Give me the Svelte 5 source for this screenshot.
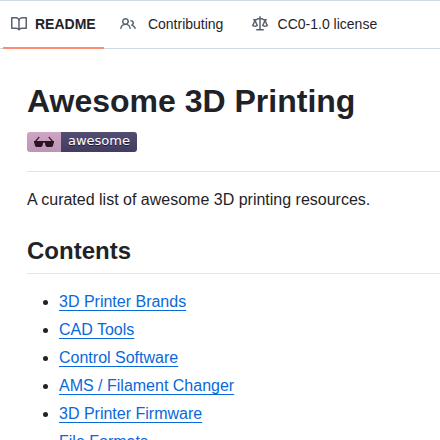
<script>
	const tabs = [
		{ id: 'readme', label: 'README' },
		{ id: 'contributing', label: 'Contributing' },
		{ id: 'license', label: 'CC0-1.0 license' }
	];

	const contents = [
		'3D Printer Brands',
		'CAD Tools',
		'Control Software',
		'AMS / Filament Changer',
		'3D Printer Firmware',
		'File Formats'
	];

	const icons = {
		readme:
			'M0 1.75A.75.75 0 0 1 .75 1h4.253c1.227 0 2.317.59 3 1.501A3.743 3.743 0 0 1 11.006 1h4.245a.75.75 0 0 1 .75.75v10.5a.75.75 0 0 1-.75.75h-4.507a2.25 2.25 0 0 0-1.591.659l-.622.621a.75.75 0 0 1-1.06 0l-.622-.621A2.25 2.25 0 0 0 5.258 13H.75a.75.75 0 0 1-.75-.75Zm7.251 10.324.004-5.073-.002-2.253A2.25 2.25 0 0 0 5.003 2.5H1.5v9h3.757a3.75 3.75 0 0 1 1.994.574ZM8.755 4.75l-.004 7.322a3.752 3.752 0 0 1 1.992-.572H14.5v-9h-3.495a2.25 2.25 0 0 0-2.25 2.25Z',
		contributing:
			'M2 5.5a3.5 3.5 0 1 1 5.898 2.549 5.508 5.508 0 0 1 3.034 4.084.75.75 0 1 1-1.482.235 4 4 0 0 0-7.9 0 .75.75 0 0 1-1.482-.236A5.507 5.507 0 0 1 3.102 8.05 3.493 3.493 0 0 1 2 5.5ZM11 4a3.001 3.001 0 0 1 2.22 5.018 5.01 5.01 0 0 1 2.56 3.012.749.749 0 0 1-.885.954.752.752 0 0 1-.549-.514 3.507 3.507 0 0 0-2.522-2.372.75.75 0 0 1-.574-.73v-.352a.75.75 0 0 1 .416-.672A1.5 1.5 0 0 0 11 5.5.75.75 0 0 1 11 4Zm-5.5-.5a2 2 0 1 0-.001 3.999A2 2 0 0 0 5.5 3.5Z',
		license:
			'M8.75.75V2h.985c.304 0 .603.08.867.231l1.29.736c.038.022.08.033.124.033h2.234a.75.75 0 0 1 0 1.5h-.427l2.111 4.692a.75.75 0 0 1-.154.838l-.53-.53.529.531-.001.002-.002.002-.006.006-.006.005-.01.01-.045.04c-.21.176-.441.327-.686.45C14.556 10.78 13.88 11 13 11a4.498 4.498 0 0 1-2.023-.454 3.544 3.544 0 0 1-.686-.45l-.045-.04-.016-.015-.006-.006-.004-.004v-.001a.75.75 0 0 1-.154-.838L12.178 4.5h-.162c-.305 0-.604-.079-.868-.231l-1.29-.736a.245.245 0 0 0-.124-.033H8.75V13h2.5a.75.75 0 0 1 0 1.5h-6.5a.75.75 0 0 1 0-1.5h2.5V3.5h-.984a.245.245 0 0 0-.124.033l-1.289.737c-.265.15-.564.23-.869.23h-.162l2.112 4.692a.75.75 0 0 1-.154.838l-.53-.53.529.531-.001.002-.002.002-.006.006-.016.015-.045.04c-.21.176-.441.327-.686.45C4.556 10.78 3.88 11 3 11a4.498 4.498 0 0 1-2.023-.454 3.544 3.544 0 0 1-.686-.45l-.045-.04-.016-.015-.006-.006-.004-.004v-.001a.75.75 0 0 1-.154-.838L2.178 4.5H1.75a.75.75 0 0 1 0-1.5h2.234a.249.249 0 0 0 .125-.033l1.288-.737c.265-.15.564-.23.869-.23h.984V.75a.75.75 0 0 1 1.5 0Zm2.945 8.477c.285.135.718.273 1.305.273s1.02-.138 1.305-.273L13 6.327Zm-10 0c.285.135.718.273 1.305.273s1.02-.138 1.305-.273L3 6.327Z'
	};

	let active = $state('readme');

	function slug(title) {
		return title.toLowerCase().replace(/[^a-z0-9 ]/g, '').replaceAll(' ', '-');
	}
</script>

<div class="page">
	<nav aria-label="Repository files">
		{#each tabs as tab}
			<a
				href="#{tab.id}"
				class="tab"
				class:active={active === tab.id}
				aria-current={active === tab.id ? 'page' : undefined}
				onclick={() => (active = tab.id)}
			>
				<svg viewBox="0 0 16 16" width="16" height="16" aria-hidden="true">
					<path d={icons[tab.id]} />
				</svg>
				<span class="label" data-content={tab.label}>{tab.label}</span>
			</a>
		{/each}
	</nav>

	<article>
		<header>
			<h1>Awesome 3D Printing</h1>
			<a class="badge" href="#awesome">
				<span class="glasses">
					<svg viewBox="0 0 20 12" width="20" height="12" aria-hidden="true">
						<path d="M1 6 5.2 1M19 6 14.8 1" fill="none" stroke="#3c2035" stroke-width="1.2" />
						<path
							d="M0 5h20v2l-.6.4-.3 2.2Q18.8 11 17.2 11h-3.8q-1.6 0-2-1.4L10.9 6.8H9.1l-.5 2.8Q8.2 11 6.6 11H2.8Q1.2 11 .9 9.6L.6 7.4 0 7Z"
							fill="#2b1225"
						/>
					</svg>
				</span>
				<span class="word">awesome</span>
			</a>
		</header>

		<p>A curated list of awesome 3D printing resources.</p>

		<h2>Contents</h2>
		<ul>
			{#each contents as item}
				<li><a href="#{slug(item)}">{item}</a></li>
			{/each}
		</ul>
	</article>
</div>

<style>
	:global(body) {
		margin: 0;
		background: #fff;
	}

	.page {
		height: 100vh;
		overflow: hidden;
		box-sizing: border-box;
		border-top: 1px solid #d1d9e0;
		color: #1f2328;
		font-family: 'Liberation Sans', Arial, sans-serif;
		font-size: 16px;
		line-height: 24px;
	}

	nav {
		display: flex;
		gap: 8px;
		padding-left: 3px;
		box-shadow: inset 0 -1px #d1d9e0;
	}

	.tab {
		display: flex;
		align-items: center;
		gap: 8px;
		height: 46px;
		padding: 0 8px;
		border-bottom: 2px solid transparent;
		color: inherit;
		font-size: 14px;
		line-height: 21px;
		text-decoration: none;
		white-space: nowrap;
	}

	.tab.active {
		border-color: #fd8c73;
		font-weight: 600;
	}

	.tab svg {
		fill: #59636e;
	}

	.label {
		text-align: center;
	}

	/* reserves the bold width so tabs don't shift when selected */
	.label::before {
		content: attr(data-content);
		display: block;
		height: 0;
		font-weight: 600;
		visibility: hidden;
	}

	article {
		padding: 32px 0 32px 27px;
	}

	header {
		padding-bottom: 19px;
		border-bottom: 1px solid #d1d9e0b3;
	}

	h1 {
		margin: 0 0 11px;
		font-size: 32px;
		line-height: 40px;
	}

	.badge {
		display: flex;
		width: max-content;
		height: 20px;
		overflow: hidden;
		border-radius: 3px;
		text-decoration: none;
	}

	.glasses {
		display: flex;
		align-items: center;
		padding: 0 7px;
		background: linear-gradient(#cca6c4, #bd94b4);
	}

	.word {
		padding: 0 7px;
		background: linear-gradient(#544d72, #433c60);
		color: #fff;
		font-family: 'DejaVu Sans', sans-serif;
		font-size: 13px;
		line-height: 18px;
		text-shadow: 0 1px #1c1838;
	}

	p {
		margin: 16px 0 24px;
	}

	h2 {
		margin: 0 0 16px;
		padding-bottom: 7px;
		border-bottom: 1px solid #d1d9e0b3;
		font-size: 24px;
		line-height: 30px;
	}

	ul {
		margin: 0;
		padding-left: 32px;
	}

	li + li {
		margin-top: 4px;
	}

	li a {
		color: #0969da;
		text-decoration: underline;
		text-underline-offset: 3px;
	}
</style>
